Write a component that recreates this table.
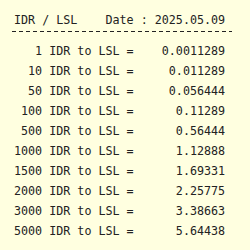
import React from 'react';

const rows: [string, string][] = [
  ['1', '0.0011289'],
  ['10', '0.011289'],
  ['50', '0.056444'],
  ['100', '0.11289'],
  ['500', '0.56444'],
  ['1000', '1.12888'],
  ['1500', '1.69331'],
  ['2000', '2.25775'],
  ['3000', '3.38663'],
  ['5000', '5.64438'],
];

const mono = "font-['DejaVu_Sans_Mono',monospace]";

export default function App() {
  return (
    <div className={`w-[250px] h-[250px] bg-[#ffffe0] text-[#222] ${mono} text-[11.7px] leading-[20px] overflow-hidden`}>
      <div className="pt-[12px] pl-[14px] whitespace-pre leading-[16px]">IDR / LSL    Date : 2025.05.09</div>
      {/* dashed rule */}
      <div className="mt-[3px] ml-[12px] w-[220px] h-[1px] bg-[repeating-linear-gradient(90deg,#222_0_4px,transparent_4px_7px)]" />
      <div className="pt-[9px] pl-[14px]">
        {rows.map(([amt, val]) => (
          <div key={amt} className="whitespace-pre">
            {amt.padStart(4, ' ')} IDR to LSL = {val.padStart(12, ' ')}
          </div>
        ))}
      </div>
    </div>
  );
}
